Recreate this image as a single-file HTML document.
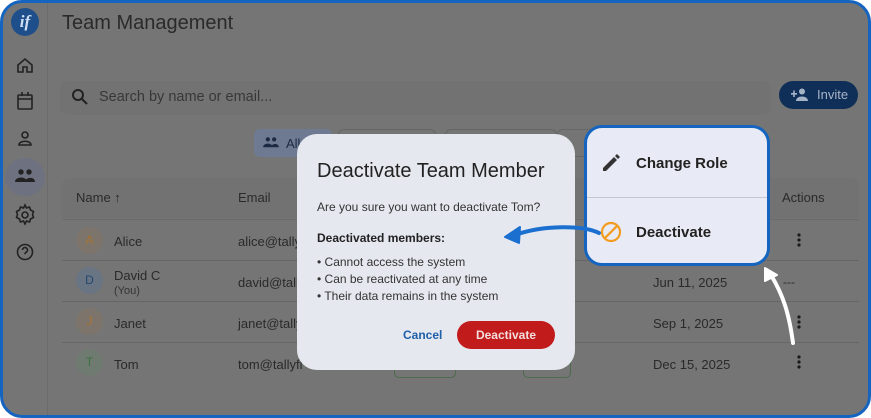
<!DOCTYPE html>
<html><head><style>
*{margin:0;padding:0;box-sizing:border-box}
body{width:871px;height:418px;background:#fff;font-family:"Liberation Sans",sans-serif;overflow:hidden;position:relative}
.frame{position:absolute;left:0;top:0;width:871px;height:418px;border:3px solid #1565c0;border-radius:22px;background:#757575;overflow:hidden}
.abs{position:absolute}
.t{color:#2a2a2a}
</style></head><body>
<div class="frame">
 <div class="abs" style="left:44px;top:0;width:1px;height:418px;background:#6c6c6c"></div>
 <!-- logo -->
 <div class="abs" style="left:8px;top:5px;width:28px;height:28px;border-radius:50%;background:#1e4f8a;color:#cfe0f5;font:italic bold 17px 'Liberation Serif',serif;text-align:center;line-height:28px">if</div>
 <svg class="abs" style="left:11px;top:50px" width="22" height="210" viewBox="0 0 22 210" fill="none" stroke="#222" stroke-width="1.6">
  <path d="M4 12 L11 6 L18 12 V19 H13 V14 H9 V19 H4 Z"/>
  <rect x="4" y="42" width="14" height="14" rx="1"/><path d="M4 46 H18 M8 39 V43 M14 39 V43"/>
  <circle cx="11" cy="82" r="3"/><path d="M5 92 C5 87 17 87 17 92 Z"/>
  <circle cx="11" cy="162" r="3"/><path d="M11 152 l1.5 3 3-1 1 3 3 1.5-1 3 1 3-3 1.5-1 3-3-1-1.5 3-1.5-3-3 1-1-3-3-1.5 1-3-1-3 3-1.5 1-3 3 1z"/>
  <circle cx="11" cy="199" r="7.5"/><path d="M8.5 197 a2.5 2.5 0 1 1 3.5 2.3 c-1 .5-1 1-1 2"/>
 </svg>
 <div class="abs" style="left:2px;top:155px;width:40px;height:38px;border-radius:19px;background:#6e7280"></div>
 <svg class="abs" style="left:12px;top:166px" width="20" height="14" viewBox="0 0 20 14" fill="#222"><circle cx="6" cy="3" r="2.7"/><circle cx="14" cy="3" r="2.7"/><path d="M0 13 C0 7 12 7 12 13Z M10 13 C10 8 20 7 20 13Z"/></svg>
 <div class="abs t" style="left:59px;top:9px;font-size:20px">Team Management</div>
 <!-- search -->
 <div class="abs" style="left:57px;top:78px;width:710px;height:34px;border-radius:8px;background:#727272"></div>
 <svg class="abs" style="left:68px;top:85px" width="18" height="18" viewBox="0 0 18 18" fill="none" stroke="#222" stroke-width="2"><circle cx="7" cy="7" r="5"/><path d="M11 11 L16 16"/></svg>
 <div class="abs" style="left:96px;top:86px;font-size:14.5px;color:#383838">Search by name or email...</div>
 <div class="abs" style="left:776px;top:78px;width:79px;height:28px;border-radius:14px;background:#0f2f58;color:#a6b3c6;font-size:13px;line-height:28px;padding-left:38px">Invite</div>
 <svg class="abs" style="left:788px;top:85px" width="18" height="13" viewBox="0 0 18 13" fill="#a6b3c6"><circle cx="11" cy="3.5" r="3"/><path d="M5 13 C5 7 17 7 17 13Z M0 5h6v1.6H0z M2.2 2.5h1.6v6.5H2.2z"/></svg>
 <!-- chips -->
 <div class="abs" style="left:251px;top:126px;width:78px;height:28px;border-radius:6px;background:#6d7a92"></div>
 <svg class="abs" style="left:260px;top:134px" width="16" height="11" viewBox="0 0 20 14" fill="#1d2a44"><circle cx="6" cy="3" r="2.7"/><circle cx="14" cy="3" r="2.7"/><path d="M0 13 C0 7 12 7 12 13Z M10 13 C10 8 20 7 20 13Z"/></svg>
 <div class="abs" style="left:283px;top:133px;font-size:13px;color:#1d2a44">All</div>
 <div class="abs" style="left:335px;top:126px;width:98px;height:28px;border-radius:6px;border:1px solid #666"></div>
 <div class="abs" style="left:442px;top:126px;width:112px;height:28px;border-radius:6px;border:1px solid #666"></div>
 <div class="abs" style="left:554px;top:126px;width:40px;height:28px;border-radius:6px;border:1px solid #666"></div>
 <!-- table -->
 <div class="abs" style="left:59px;top:175px;width:797px;height:40px;background:#727272;border-radius:8px 8px 0 0"></div>
 <div class="abs t" style="left:73px;top:187px;font-size:13px">Name ↑</div>
 <div class="abs t" style="left:235px;top:187px;font-size:13px">Email</div>
 <div class="abs t" style="left:779px;top:187px;font-size:13px">Actions</div>
 <div class="abs" style="left:59px;top:216px;width:797px;height:1px;background:#6a6a6a"></div>
 <div class="abs" style="left:59px;top:257px;width:797px;height:1px;background:#666"></div>
 <div class="abs" style="left:59px;top:298px;width:797px;height:1px;background:#666"></div>
 <div class="abs" style="left:59px;top:339px;width:797px;height:1px;background:#666"></div>
 <div class="abs" style="left:73px;top:224px;width:27px;height:27px;border-radius:50%;background:#7d756c;color:#a8732e;font-size:12px;text-align:center;line-height:27px">A</div>
 <div class="abs" style="left:73px;top:264px;width:27px;height:27px;border-radius:50%;background:#6a7584;color:#22476f;font-size:12px;text-align:center;line-height:27px">D</div>
 <div class="abs" style="left:73px;top:305px;width:27px;height:27px;border-radius:50%;background:#7d756c;color:#a8732e;font-size:12px;text-align:center;line-height:27px">J</div>
 <div class="abs" style="left:73px;top:346px;width:27px;height:27px;border-radius:50%;background:#6f7a70;color:#3b7240;font-size:12px;text-align:center;line-height:27px">T</div>
 <div class="abs t" style="left:111px;top:231px;font-size:13px">Alice</div>
 <div class="abs t" style="left:111px;top:265px;font-size:13px">David C</div>
 <div class="abs t" style="left:111px;top:282px;font-size:11px;color:#333">(You)</div>
 <div class="abs t" style="left:111px;top:313px;font-size:13px">Janet</div>
 <div class="abs t" style="left:111px;top:354px;font-size:13px">Tom</div>
 <div class="abs t" style="left:235px;top:231px;font-size:13px">alice@tally</div>
 <div class="abs t" style="left:235px;top:272px;font-size:13px">david@tally</div>
 <div class="abs t" style="left:235px;top:313px;font-size:13px">janet@tally</div>
 <div class="abs t" style="left:235px;top:354px;font-size:13px">tom@tallyfl</div>
 <div class="abs" style="left:391px;top:355px;width:62px;height:20px;border:1px solid #4d6b4d;border-radius:5px"></div>
 <div class="abs" style="left:520px;top:355px;width:48px;height:20px;border:1px solid #4d6b4d;border-radius:5px"></div>
 <div class="abs t" style="left:650px;top:272px;font-size:13px">Jun 11, 2025</div>
 <div class="abs t" style="left:650px;top:313px;font-size:13px">Sep 1, 2025</div>
 <div class="abs t" style="left:650px;top:354px;font-size:13px">Dec 15, 2025</div>
 <div class="abs t" style="left:780px;top:272px;font-size:12px">---</div>
 <svg class="abs" style="left:794px;top:230px" width="4" height="140" viewBox="0 0 4 140" fill="#1a1a1a">
  <circle cx="2" cy="2" r="1.6"/><circle cx="2" cy="7" r="1.6"/><circle cx="2" cy="12" r="1.6"/>
  <circle cx="2" cy="84" r="1.6"/><circle cx="2" cy="89" r="1.6"/><circle cx="2" cy="94" r="1.6"/>
  <circle cx="2" cy="124" r="1.6"/><circle cx="2" cy="129" r="1.6"/><circle cx="2" cy="134" r="1.6"/>
 </svg>
 <!-- dialog -->
 <div class="abs" style="left:294px;top:131px;width:278px;height:236px;border-radius:20px;background:#e6e8f0"></div>
 <div class="abs" style="left:314px;top:157px;font-size:20px;color:#222">Deactivate Team Member</div>
 <div class="abs" style="left:314px;top:197px;font-size:12px;color:#333">Are you sure you want to deactivate Tom?</div>
 <div class="abs" style="left:314px;top:228px;font-size:12px;font-weight:bold;color:#222">Deactivated members:</div>
 <div class="abs" style="left:314px;top:251px;font-size:12px;color:#333;line-height:17px">• Cannot access the system<br>• Can be reactivated at any time<br>• Their data remains in the system</div>
 <div class="abs" style="left:400px;top:325px;font-size:12px;font-weight:bold;color:#1e5fa8">Cancel</div>
 <div class="abs" style="left:454px;top:318px;width:98px;height:28px;border-radius:14px;background:#c21b1b;color:#f3dede;font-size:12px;font-weight:bold;text-align:center;line-height:28px">Deactivate</div>
 <!-- menu -->
 <div class="abs" style="left:581px;top:122px;width:186px;height:141px;border:3px solid #1565c0;border-radius:18px;background:#e8ebf5"></div>
 <div class="abs" style="left:584px;top:194px;width:180px;height:1px;background:#c4c7d0"></div>
 <svg class="abs" style="left:598px;top:150px" width="20" height="20" viewBox="0 0 20 20" fill="#333"><path d="M2 15 L13 4 L16 7 L5 18 H2 Z M14 3 L16 1 L19 4 L17 6Z"/></svg>
 <div class="abs" style="left:633px;top:152px;font-size:15px;font-weight:bold;color:#222">Change Role</div>
 <svg class="abs" style="left:597px;top:218px" width="22" height="22" viewBox="0 0 22 22" fill="none" stroke="#f39c1f" stroke-width="2.2"><circle cx="11" cy="11" r="9"/><path d="M4.8 17.2 L17.2 4.8"/></svg>
 <div class="abs" style="left:633px;top:221px;font-size:15px;font-weight:bold;color:#222">Deactivate</div>
 <!-- arrows -->
 <svg class="abs" style="left:0;top:0" width="871" height="418" viewBox="0 0 871 418" fill="none">
  <path d="M596 230 C580 222 540 222 512 232" stroke="#1a6fcf" stroke-width="4" stroke-linecap="round"/>
  <path d="M502 234 L517 224 L516 240 Z" fill="#1a6fcf" stroke="#1a6fcf" stroke-width="2" stroke-linejoin="round"/>
  <path d="M790 340 C786 310 780 292 768 272" stroke="#fff" stroke-width="4" stroke-linecap="round"/>
  <path d="M762 265 L774 272 L762 278 Z" fill="#fff" stroke="#fff" stroke-width="2" stroke-linejoin="round"/>
 </svg>
</div>
</body></html>
